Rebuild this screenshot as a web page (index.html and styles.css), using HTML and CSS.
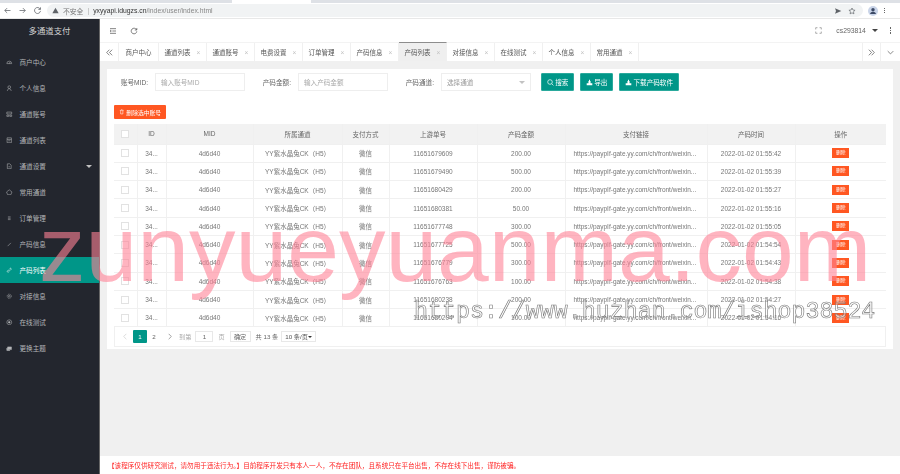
FILE: index.html
```html
<!DOCTYPE html>
<html lang="zh-CN">
<head>
  <meta charset="UTF-8">
  <title>多通道支付</title>
  <link rel="stylesheet" href="styles.css">
</head>
<body>
  <div class="page">
    <!-- browser bar -->
    <div class="tabstrip"><span class="tabstrip-active"></span></div>
    <div class="urlbar">
      <svg class="ub-icon" viewBox="0 0 12 12"><path d="M10 6H2.5M5.5 2.8 2.3 6l3.2 3.2"/></svg>
      <svg class="ub-icon" viewBox="0 0 12 12"><path d="M2 6h7.5M6.5 2.8 9.7 6 6.5 9.2"/></svg>
      <svg class="ub-icon" viewBox="0 0 12 12"><path d="M9.6 4.2A4 4 0 1 0 10 6.5M10 1.8v2.8H7.2"/></svg>
      <div class="omnibox">
        <svg class="warn" viewBox="0 0 10 10"><path d="M5 1 9.5 9H.5z"/></svg>
        <span class="insecure">不安全</span><span class="sep">|</span>
        <span class="host">yxyyapi.idugzs.cn</span><span class="path">/index/user/index.html</span>
        <span class="grow"></span>
        <svg class="omni-icon fill" viewBox="0 0 12 12"><path d="M1.5 2 11 6 1.5 10 3 6z"/></svg>
        <svg class="omni-icon" viewBox="0 0 12 12"><path d="m6 1.5 1.4 3 3.2.4-2.4 2.2.7 3.2L6 8.7l-2.9 1.6.7-3.2-2.4-2.2 3.2-.4z"/></svg>
      </div>
      <svg class="avatar" viewBox="0 0 14 14"><circle cx="7" cy="7" r="7"/><circle class="avatar-fg" cx="7" cy="5.2" r="2.4"/><path class="avatar-fg" d="M2.8 11.2c.5-2 2.2-3 4.2-3s3.7 1 4.2 3z"/></svg>
      <span class="ub-dots"><i></i><i></i><i></i></span>
    </div>

    <div class="app">
      <aside class="side">
        <div class="logo">多通道支付</div>
        <nav>
          <a class="nav-item"><svg viewBox="0 0 12 12"><path d="M1.5 8.5a4.5 4.5 0 1 1 9 0zM6 8.5l1.5-3"/></svg>商户中心</a>
          <a class="nav-item"><svg viewBox="0 0 12 12"><circle cx="6" cy="4" r="2.5"/><path d="M2.5 11c0-2.5 1.5-4 3.5-4s3.5 1.5 3.5 4"/></svg>个人信息</a>
          <a class="nav-item"><svg viewBox="0 0 12 12"><path d="M1.5 2h9v3.5h-9zM1.5 7.5H5V10H1.500zM7 7.5h3.500V10H7z"/></svg>通道账号</a>
          <a class="nav-item"><svg viewBox="0 0 12 12"><path d="M2 1.5h8v9H2zM2 4.5h8M4 7h4"/></svg>通道列表</a>
          <a class="nav-item"><svg viewBox="0 0 12 12"><path d="M2.5 1.5H7L9.5 4v6.5h-7zM4.5 7h3"/></svg>通道设置<span class="caret"></span></a>
          <a class="nav-item"><svg viewBox="0 0 12 12"><path d="M6 1.5l5 4-2 5H3l-2-5z"/></svg>常用通道</a>
          <a class="nav-item"><svg viewBox="0 0 12 12"><path d="M3.5 3.5h5M3.5 6h5M3.5 8.5h5"/></svg>订单管理</a>
          <a class="nav-item"><svg viewBox="0 0 12 12" stroke-width="1.6"><path d="M3 9.5l6-6"/></svg>产码信息</a>
          <a class="nav-item active"><svg viewBox="0 0 12 12" stroke-width="1.5"><path d="M5 7l2-2M4.5 5.5L2.700 7.300a1.400 1.400 0 0 0 2 2L6.500 7.500M5.500 4.500L7.300 2.700a1.400 1.400 0 0 1 2 2L7.500 6.500"/></svg>产码列表</a>
          <a class="nav-item"><svg viewBox="0 0 12 12" stroke-width="1.5"><circle cx="6" cy="6" r="3.8" stroke-dasharray="2 .8"/><circle cx="6" cy="6" r="1.5"/></svg>对接信息</a>
          <a class="nav-item"><svg viewBox="0 0 12 12"><circle cx="6" cy="6" r="4.5"/><circle cx="6" cy="6" r="1.6" fill="currentColor"/></svg>在线测试</a>
          <a class="nav-item"><svg viewBox="0 0 12 12"><path d="M3 3.5h7v5H3zM1.5 5.500V10h6" fill="currentColor"/></svg>更换主题</a>
        </nav>
      </aside>

      <div class="main">
        <header class="topbar">
          <svg class="tb-icon" viewBox="0 0 12 12"><path d="M1.5 2.5h9M5 6h5.5M1.5 9.5h9M1.5 4.5l2 1.500-2 1.500"/></svg>
          <svg class="tb-icon reload" viewBox="0 0 12 12"><path d="M9.8 4.2A4.200 4.200 0 1 0 10.200 6.500M10.200 1.500v3h-3"/></svg>
          <span class="grow"></span>
          <svg class="tb-small" viewBox="0 0 10 10"><path d="M1 3.5V1h2.500M6.500 1H9v2.500M9 6.500V9H6.500M3.500 9H1V6.500"/></svg>
          <span class="user">cs293814</span>
          <span class="user-caret"></span>
          <span class="v-dots"><i></i><i></i><i></i></span>
        </header>

        <div class="tabs">
          <span class="tab-arrow">
            <svg viewBox="0 0 10 10"><path d="M4.8 1L1 5l3.800 4M8.800 1L5 5l3.800 4"/></svg>
          </span>
          <span class="tab home">商户中心</span>
          <span class="tab">通道列表<b>×</b></span>
          <span class="tab">通道账号<b>×</b></span>
          <span class="tab">电费设置<b>×</b></span>
          <span class="tab">订单管理<b>×</b></span>
          <span class="tab">产码信息<b>×</b></span>
          <span class="tab current">产码列表<b>×</b></span>
          <span class="tab">对接信息<b>×</b></span>
          <span class="tab">在线测试<b>×</b></span>
          <span class="tab">个人信息<b>×</b></span>
          <span class="tab">常用通道<b>×</b></span>
          <span class="grow"></span>
          <span class="tab-arrow right">
            <svg viewBox="0 0 10 10"><path d="M1.2 1L5 5 1.200 9M5.200 1L9 5 5.200 9"/></svg>
          </span>
          <span class="tab-arrow last">
            <svg viewBox="0 0 10 10"><path d="M1 3l4 4 4-4"/></svg>
          </span>
        </div>

        <main class="content">
          <section class="card">
            <div class="filter">
              <label class="field"><span>账号MID:</span><input type="text" placeholder="输入账号MID"></label>
              <label class="field"><span>产码金额:</span><input type="text" placeholder="输入产码金额"></label>
              <label class="field"><span>产码通道:</span><span class="select">选择通道<i></i></span></label>
              <button class="btn w33">
                <svg viewBox="0 0 10 10"><circle cx="4.3" cy="4.3" r="3.3"/><path d="M6.800 6.800l2.400 2.400"/></svg>搜索
              </button>
              <button class="btn w33">
                <svg viewBox="0 0 10 10"><path class="solid" d="M1 6h8v3H1zM3.500 3h3v3h-3zM4.300 1h1.400v2H4.300z"/></svg>导出
              </button>
              <button class="btn w60">
                <svg viewBox="0 0 10 10"><path class="solid" d="M1 6h8v3H1zM3.500 3h3v3h-3zM4.300 1h1.400v2H4.300z"/></svg>下载产码软件
              </button>
            </div>

            <button class="btn-del">
              <svg viewBox="0 0 10 10"><path d="M1.500 2.500h7M3 2.500V9h4V2.500M4 1h2"/></svg>删除选中账号
            </button>

            <table class="grid">
              <colgroup>
                <col class="c-check"><col class="c-id"><col class="c-mid"><col class="c-channel"><col class="c-pay">
                <col class="c-no"><col class="c-amount"><col class="c-link"><col class="c-time"><col class="c-op">
              </colgroup>
              <thead>
                <tr><th><span class="check"></span></th><th>ID</th><th>MID</th><th>所属通道</th><th>支付方式</th><th>上游单号</th><th>产码金额</th><th>支付链接</th><th>产码时间</th><th>操作</th></tr>
              </thead>
              <tbody>
                <tr><td><span class="check"></span></td><td>34...</td><td>4d6d40</td><td>YY紫水晶兔CK（H5）</td><td>微信</td><td>11651679609</td><td>200.00</td><td class="link">https://paypIf-gate.yy.com/ch/front/weixin...</td><td>2022-01-02 01:55:42</td><td><span class="del">删除</span></td></tr>
                <tr><td><span class="check"></span></td><td>34...</td><td>4d6d40</td><td>YY紫水晶兔CK（H5）</td><td>微信</td><td>11651679490</td><td>500.00</td><td class="link">https://paypIf-gate.yy.com/ch/front/weixin...</td><td>2022-01-02 01:55:39</td><td><span class="del">删除</span></td></tr>
                <tr><td><span class="check"></span></td><td>34...</td><td>4d6d40</td><td>YY紫水晶兔CK（H5）</td><td>微信</td><td>11651680429</td><td>200.00</td><td class="link">https://paypIf-gate.yy.com/ch/front/weixin...</td><td>2022-01-02 01:55:27</td><td><span class="del">删除</span></td></tr>
                <tr><td><span class="check"></span></td><td>34...</td><td>4d6d40</td><td>YY紫水晶兔CK（H5）</td><td>微信</td><td>11651680381</td><td>50.00</td><td class="link">https://paypIf-gate.yy.com/ch/front/weixin...</td><td>2022-01-02 01:55:16</td><td><span class="del">删除</span></td></tr>
                <tr><td><span class="check"></span></td><td>34...</td><td>4d6d40</td><td>YY紫水晶兔CK（H5）</td><td>微信</td><td>11651677748</td><td>300.00</td><td class="link">https://paypIf-gate.yy.com/ch/front/weixin...</td><td>2022-01-02 01:55:05</td><td><span class="del">删除</span></td></tr>
                <tr><td><span class="check"></span></td><td>34...</td><td>4d6d40</td><td>YY紫水晶兔CK（H5）</td><td>微信</td><td>11651677725</td><td>500.00</td><td class="link">https://paypIf-gate.yy.com/ch/front/weixin...</td><td>2022-01-02 01:54:54</td><td><span class="del">删除</span></td></tr>
                <tr><td><span class="check"></span></td><td>34...</td><td>4d6d40</td><td>YY紫水晶兔CK（H5）</td><td>微信</td><td>11651676779</td><td>300.00</td><td class="link">https://paypIf-gate.yy.com/ch/front/weixin...</td><td>2022-01-02 01:54:43</td><td><span class="del">删除</span></td></tr>
                <tr><td><span class="check"></span></td><td>34...</td><td>4d6d40</td><td>YY紫水晶兔CK（H5）</td><td>微信</td><td>11651676763</td><td>100.00</td><td class="link">https://paypIf-gate.yy.com/ch/front/weixin...</td><td>2022-01-02 01:54:38</td><td><span class="del">删除</span></td></tr>
                <tr><td><span class="check"></span></td><td>34...</td><td>4d6d40</td><td>YY紫水晶兔CK（H5）</td><td>微信</td><td>11651680238</td><td>200.00</td><td class="link">https://paypIf-gate.yy.com/ch/front/weixin...</td><td>2022-01-02 01:54:27</td><td><span class="del">删除</span></td></tr>
                <tr><td><span class="check"></span></td><td>34...</td><td>4d6d40</td><td>YY紫水晶兔CK（H5）</td><td>微信</td><td>11651680204</td><td>100.00</td><td class="link">https://paypIf-gate.yy.com/ch/front/weixin...</td><td>2022-01-02 01:54:16</td><td><span class="del">删除</span></td></tr>
              </tbody>
            </table>

            <div class="pager">
              <svg class="pg-arrow off" viewBox="0 0 6 10"><path d="M5 1L1 5l4 4"/></svg>
              <span class="pg-num on">1</span>
              <span class="pg-num">2</span>
              <svg class="pg-arrow" viewBox="0 0 6 10"><path d="M1 1l4 4-4 4"/></svg>
              <span class="pg-muted">到第</span>
              <span class="pg-box">1</span>
              <span class="pg-muted">页</span>
              <span class="pg-ok">确定</span>
              <span class="pg-total">共 13 条</span>
              <span class="pg-size">10 条/页<i></i></span>
            </div>
          </section>
        </main>

        <footer class="notice">【该程序仅供研究测试，请勿用于违法行为。】目前程序开发只有本人一人，不存在团队，且系统只在平台出售，不存在线下出售，谨防被骗。</footer>
      </div>
    </div>
  </div>

  <div class="mark-big">zunyueyuanma.com</div>
  <div class="mark-url">https://www.huzhan.com/ishop38524</div>
</body>
</html>
```

FILE: styles.css
```css
* {
  box-sizing: border-box;
}

html, body {
  margin: 0;
  height: 474px;
  overflow: hidden;
}

body {
  position: relative;
  font-family: "Liberation Sans", "Noto Sans CJK SC", sans-serif;
  font-size: 6.6px;
  color: #666;
  background: #fff;
}

svg {
  fill: none;
  stroke: currentColor;
  stroke-width: 1;
  flex: none;
}

.grow {
  flex: 1;
}

.page {
  height: 474px;
  display: flex;
  flex-direction: column;
  filter: blur(0.5px);
}

/* browser bar */
.tabstrip {
  height: 3px;
  background: #dee1e6;
  padding-left: 232px;
}

.tabstrip-active {
  display: block;
  width: 79px;
  height: 3px;
  background: #fff;
}

.urlbar {
  height: 16px;
  display: flex;
  align-items: center;
  padding: 0 6px 0 3px;
  border-bottom: 1px solid #e8e8e8;
  color: #5f6368;
}

.ub-icon {
  width: 9px;
  height: 9px;
  margin-right: 6px;
}

.omnibox {
  width: 816px;
  height: 13px;
  margin-left: -1px;
  padding: 0 7px 0 5px;
  border-radius: 7px;
  background: #f1f3f4;
  display: flex;
  align-items: center;
  font-size: 6.8px;
}

.warn {
  width: 7px;
  height: 7px;
  fill: #5f6368;
  stroke: none;
  margin-right: 4px;
}

.insecure {
  color: #777;
}

.sep {
  margin: 0 4px;
  color: #aaa;
}

.host {
  color: #333;
}

.path {
  color: #888;
}

.omni-icon {
  width: 8px;
  height: 8px;
  margin-left: 6px;
}

.omni-icon.fill {
  fill: #5f6368;
  stroke: none;
}

.avatar {
  width: 10px;
  height: 10px;
  margin-left: 5px;
  fill: #c9d4e8;
  stroke: none;
}

.avatar-fg {
  fill: #3c4a66;
}

.ub-dots {
  margin-left: 6px;
  display: flex;
  flex-direction: column;
  gap: 1px;
}

.ub-dots i,
.v-dots i {
  display: block;
  width: 1.2px;
  height: 1.2px;
  background: #666;
}

/* app frame */
.app {
  flex: 1;
  display: flex;
  min-height: 0;
}

.side {
  width: 99px;
  background: #23262e;
  color: #b4b6b9;
}

.logo {
  height: 24px;
  margin-bottom: 6px;
  text-align: center;
  line-height: 24px;
  font-size: 8.4px;
  color: #d2d2d2;
}

.nav-item {
  height: 26px;
  display: flex;
  align-items: center;
  padding-left: 6px;
  gap: 7px;
  position: relative;
}

.nav-item svg {
  width: 6.5px;
  height: 6.5px;
}

.nav-item.active {
  background: #009688;
  color: #fff;
}

.caret {
  position: absolute;
  right: 7px;
  top: 12px;
  border: 3px solid transparent;
  border-top-color: #c2c2c2;
  border-bottom: 0;
}

.main {
  flex: 1;
  min-width: 0;
  display: flex;
  flex-direction: column;
  border-left: 1px solid #666;
}

.topbar {
  height: 23px;
  display: flex;
  align-items: center;
  padding: 0 9px;
  color: #444;
}

.tb-icon {
  width: 8px;
  height: 8px;
}

.tb-icon.reload {
  margin-left: 13px;
}

.tb-small {
  width: 7px;
  height: 7px;
  color: #888;
}

.user {
  margin-left: 14px;
  font-size: 6.8px;
  color: #666;
}

.user-caret {
  margin-left: 6px;
  border: 3px solid transparent;
  border-top-color: #444;
  border-bottom: 0;
}

.v-dots {
  margin-left: 12px;
  display: flex;
  flex-direction: column;
  gap: 1.3px;
}

.tabs {
  height: 19px;
  display: flex;
  align-items: stretch;
  border-top: 1px solid #f3f3f3;
  font-size: 6.5px;
  color: #555;
}

.tab-arrow {
  width: 19px;
  display: flex;
  align-items: center;
  justify-content: center;
  border-right: 1px solid #f0f0f0;
  color: #555;
}

.tab-arrow svg {
  width: 7px;
  height: 7px;
}

.tab-arrow.right {
  border-left: 1px solid #f0f0f0;
}

.tab-arrow.last {
  border-right: 0;
}

.tab {
  width: 48px;
  display: flex;
  align-items: center;
  justify-content: center;
  gap: 6px;
  border-right: 1px solid #f0f0f0;
}

.tab b {
  font-weight: 400;
  font-size: 6.5px;
  color: #c2c2c2;
}

.tab.home {
  width: 40px;
}

.tab.current {
  background: #efefef;
  border-top: 1px solid #8d8d8d;
  margin-top: -1px;
}

/* content */
.content {
  flex: 1;
  min-height: 0;
  background: #f0f0f0;
  padding: 8px 7px 0;
}

.card {
  height: 280px;
  background: #fff;
  padding: 4px 7px 0;
}

.filter {
  display: flex;
  align-items: center;
  gap: 10px;
  margin-left: -2px;
  height: 18px;
}

.field {
  display: flex;
  align-items: center;
  color: #666;
}

.field > span:first-child {
  width: 43px;
  padding-right: 7px;
  text-align: right;
  white-space: nowrap;
}

.field input,
.select {
  width: 90px;
  height: 18px;
  padding: 0 5px;
  border: 1px solid #eee;
  background: #fff;
  font: inherit;
  color: #888;
  outline: 0;
}

.field input::placeholder {
  color: #aaa;
}

.select {
  display: flex;
  align-items: center;
  justify-content: space-between;
  color: #999;
}

.select i {
  border: 3px solid transparent;
  border-top-color: #c2c2c2;
  border-bottom: 0;
}

.btn {
  height: 18px;
  padding: 0;
  border: 1px solid #2aa99c;
  border-radius: 1px;
  background: #009688;
  color: #fff;
  font: inherit;
  display: flex;
  align-items: center;
  justify-content: center;
  gap: 1.5px;
}

.filter .btn + .btn {
  margin-left: -4px;
}

.btn svg {
  width: 7px;
  height: 7px;
}

.btn .solid {
  fill: #fff;
  stroke: none;
}

.w33 {
  width: 33px;
}

.w60 {
  width: 60px;
}

.btn-del {
  margin: 14px 0 5px;
  display: flex;
  align-items: center;
  justify-content: center;
  gap: 2px;
  width: 52px;
  height: 14px;
  padding: 0;
  border: 0;
  border-radius: 1px;
  background: #ff5722;
  color: #fff;
  font: inherit;
  font-size: 5.8px;
}

.btn-del svg {
  width: 5.5px;
  height: 5.5px;
}

.grid {
  width: 772px;
  table-layout: fixed;
  border-collapse: collapse;
  text-align: center;
  font-size: 6.5px;
}

.c-check { width: 23px; }
.c-id { width: 29px; }
.c-mid { width: 87px; }
.c-channel { width: 89px; }
.c-pay { width: 47px; }
.c-no { width: 88px; }
.c-amount { width: 88px; }
.c-link { width: 142px; }
.c-time { width: 88px; }
.c-op { width: 91px; }

.grid th,
.grid td {
  padding: 0;
  border: 1px solid #f0f0f0;
  white-space: nowrap;
  overflow: hidden;
}

.grid th {
  height: 20px;
  background: #f2f2f2;
  font-weight: 400;
  color: #666;
  border-top: 0;
}

.grid td {
  height: 18.3px;
  color: #777;
}

.grid td.link {
  text-align: left;
  padding-left: 8px;
}

.grid tr > :first-child {
  border-left: 0;
}

.grid tr > :last-child {
  border-right: 0;
}

.check {
  display: block;
  width: 8px;
  height: 8px;
  margin: 0 auto;
  border: 1px solid #e2e2e2;
  background: #fff;
}

.del {
  display: block;
  width: 17px;
  height: 10px;
  margin: 0 auto;
  line-height: 10px;
  background: #ff5722;
  color: #fff;
  font-size: 4.8px;
}

.pager {
  width: 772px;
  height: 20px;
  display: flex;
  align-items: center;
  padding-left: 8px;
  border: 1px solid #f0f0f0;
  border-top: 0;
  color: #666;
  font-size: 6.2px;
}

.pg-arrow {
  width: 4px;
  height: 7px;
  color: #777;
}

.pg-arrow.off {
  color: #ccc;
}

.pg-num {
  width: 14px;
  height: 13px;
  display: flex;
  align-items: center;
  justify-content: center;
}

.pg-num.on {
  margin-left: 6px;
  background: #009688;
  color: #fff;
  border-radius: 1px;
}

.pg-num + .pg-arrow {
  margin-left: 7px;
}

.pg-muted {
  color: #aaa;
  margin-left: 7px;
}

.pg-box {
  width: 18px;
  height: 11px;
  margin-left: 4px;
  border: 1px solid #e8e8e8;
  text-align: center;
  line-height: 9px;
}

.pg-box + .pg-muted {
  margin-left: 5px;
}

.pg-ok {
  width: 21px;
  height: 11px;
  margin-left: 5px;
  border: 1px solid #e8e8e8;
  text-align: center;
  line-height: 9px;
}

.pg-total {
  margin-left: 5px;
}

.pg-size {
  width: 35px;
  height: 11px;
  margin-left: 3px;
  padding: 0 3px;
  border: 1px solid #e8e8e8;
  display: flex;
  align-items: center;
  justify-content: space-between;
  color: #555;
}

.pg-size i {
  border: 2.2px solid transparent;
  border-top-color: #333;
  border-bottom: 0;
}

.notice {
  height: 18px;
  padding-left: 8px;
  line-height: 19px;
  background: #fff;
  color: #ff2222;
  font-size: 6.6px;
  white-space: nowrap;
}

/* overlays */
.mark-big {
  position: absolute;
  left: 39px;
  top: 203px;
  font-size: 93px;
  line-height: 93px;
  color: rgba(255, 130, 150, 0.6);
  white-space: nowrap;
}

.mark-url {
  position: absolute;
  left: 414px;
  top: 298px;
  font-family: "Liberation Mono", monospace;
  font-size: 23.3px;
  line-height: 28px;
  color: rgba(255, 255, 255, 0.4);
  -webkit-text-stroke: 0.6px #777;
  white-space: nowrap;
}
```
